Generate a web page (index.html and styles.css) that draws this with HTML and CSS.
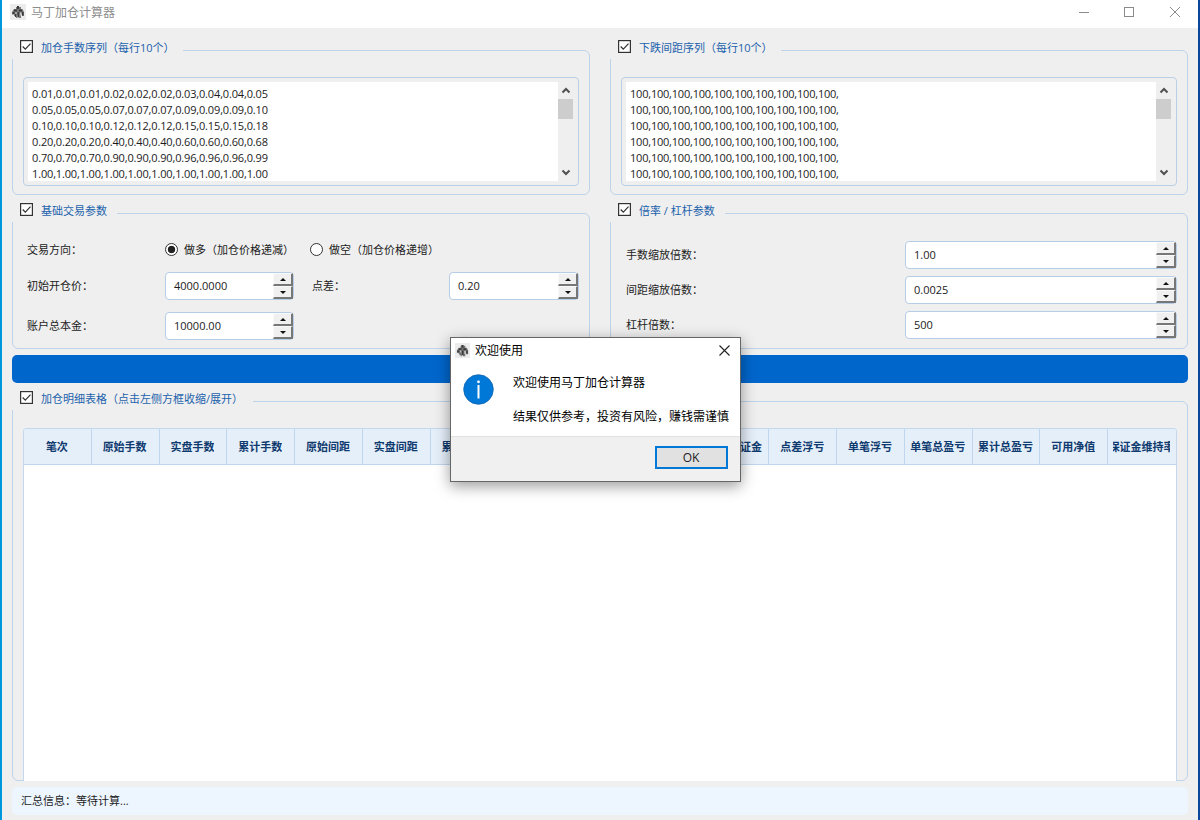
FILE: index.html
```html
<!DOCTYPE html>
<html lang="zh-CN">
  <head>
    <title>马丁加仓计算器</title>
    <meta charset="utf-8" />
    <link rel="stylesheet" href="styles.css">
  </head>
  <body>
    <svg class="defs" width="0" height="0">
      <symbol id="app-icon" viewBox="0 0 16 16">
        <rect width="16" height="16" fill="#ececec" />
        <path d="M6 3h1V2h2v1h2v2h1.500l1.500 3v4h-2v-1.500h-1V14H8.500v-3h-1v3H6v-3.500H5V12H4v-1.500H2V8L4 5h2z" fill="#777" />
        <path d="M7 2h2v3H7zM4 5.500h3v2H4zM9 5.500h3v2H9zM7.500 8H9v5H7.500zM2.500 8h2v2h-2zM12 8h1.500v3.500H12zM5 10h1v3H5z" fill="#3a3a3a" />
        <path d="M5.500 8h1v2h-1zM10 8.500h1.500v3H10z" fill="#ccc" />
      </symbol>
      <symbol id="up" viewBox="0 0 10 8">
        <path d="M1.500 6.500L5 3l3.500 3.500" fill="none" stroke="#505050" stroke-width="2" />
      </symbol>
      <symbol id="down" viewBox="0 0 10 8">
        <path d="M1.500 1.500L5 5l3.500-3.500" fill="none" stroke="#505050" stroke-width="2" />
      </symbol>
      <symbol id="check" viewBox="0 0 13 13">
        <rect x=".6" y=".6" width="11.800" height="11.800" fill="#fff" stroke="#333" stroke-width="1.200" />
        <path d="M2.700 6.500l2.600 2.700 5.200-5.600" fill="none" stroke="#333" stroke-width="1.200" />
      </symbol>
    </svg>

    <div class="window">
      <div class="titlebar">
        <svg class="app-icon"><use href="#app-icon" /></svg>
        <span class="title">马丁加仓计算器</span>
        <svg class="controls" width="102" height="12" viewBox="0 0 102 12" fill="none" stroke="#8a8a8a">
          <path d="M0 6.500h10" />
          <rect x="45.500" y="1.500" width="9" height="9" />
          <path d="M91 1l10 10M101 1L91 11" />
        </svg>
      </div>

      <div class="main">
        <div class="groups">
          <!-- Lot sequence -->
          <div class="group seq">
            <div class="legend w171"><svg class="check"><use href="#check" /></svg>加仓手数序列（每行10个）</div>
            <div class="editor">
              <pre class="lots">0.01,0.01,0.01,0.02,0.02,0.02,0.03,0.04,0.04,0.05
0.05,0.05,0.05,0.07,0.07,0.07,0.09,0.09,0.09,0.10
0.10,0.10,0.10,0.12,0.12,0.12,0.15,0.15,0.15,0.18
0.20,0.20,0.20,0.40,0.40,0.40,0.60,0.60,0.60,0.68
0.70,0.70,0.70,0.90,0.90,0.90,0.96,0.96,0.96,0.99
1.00,1.00,1.00,1.00,1.00,1.00,1.00,1.00,1.00,1.00</pre>
              <div class="scrollbar">
                <svg class="arrow"><use href="#up" /></svg>
                <div class="thumb"></div>
                <svg class="arrow last"><use href="#down" /></svg>
              </div>
            </div>
          </div>

          <!-- Distance sequence -->
          <div class="group seq">
            <div class="legend w171"><svg class="check"><use href="#check" /></svg>下跌间距序列（每行10个）</div>
            <div class="editor">
              <pre class="gaps">100,100,100,100,100,100,100,100,100,100,
100,100,100,100,100,100,100,100,100,100,
100,100,100,100,100,100,100,100,100,100,
100,100,100,100,100,100,100,100,100,100,
100,100,100,100,100,100,100,100,100,100,
100,100,100,100,100,100,100,100,100,100,</pre>
              <div class="scrollbar">
                <svg class="arrow"><use href="#up" /></svg>
                <div class="thumb"></div>
                <svg class="arrow last"><use href="#down" /></svg>
              </div>
            </div>
          </div>

          <!-- Base parameters -->
          <div class="group params">
            <div class="legend w105"><svg class="check"><use href="#check" /></svg>基础交易参数</div>
            <div class="base-form">
              <span>交易方向：</span>
              <div class="radios">
                <i class="radio on"></i><span class="long">做多（加仓价格递减）</span>
                <i class="radio"></i><span>做空（加仓价格递增）</span>
              </div>
              <span>初始开仓价：</span>
              <div class="spin"><span>4000.0000</span><div class="steps"><b class="inc"></b><b class="dec"></b></div></div>
              <span class="spread">点差：</span>
              <div class="spin"><span>0.20</span><div class="steps"><b class="inc"></b><b class="dec"></b></div></div>
              <span>账户总本金：</span>
              <div class="spin"><span>10000.00</span><div class="steps"><b class="inc"></b><b class="dec"></b></div></div>
            </div>
          </div>

          <!-- Multipliers -->
          <div class="group params">
            <div class="legend w115"><svg class="check"><use href="#check" /></svg>倍率 / 杠杆参数</div>
            <div class="ratio-form">
              <span>手数缩放倍数：</span>
              <div class="spin"><span>1.00</span><div class="steps"><b class="inc"></b><b class="dec"></b></div></div>
              <span>间距缩放倍数：</span>
              <div class="spin"><span>0.0025</span><div class="steps"><b class="inc"></b><b class="dec"></b></div></div>
              <span>杠杆倍数：</span>
              <div class="spin"><span>500</span><div class="steps"><b class="inc"></b><b class="dec"></b></div></div>
            </div>
          </div>
        </div>

        <button class="calc" type="button"></button>

        <!-- Result table -->
        <div class="group detail">
          <div class="legend w241"><svg class="check"><use href="#check" /></svg>加仓明细表格（点击左侧方框收缩/展开）</div>
          <div class="table">
            <div class="thead">
              <div><span>笔次</span></div>
              <div><span>原始手数</span></div>
              <div><span>实盘手数</span></div>
              <div><span>累计手数</span></div>
              <div><span>原始间距</span></div>
              <div><span>实盘间距</span></div>
              <div><span>累计间距</span></div>
              <div></div>
              <div></div>
              <div></div>
              <div><span>占用保证金</span></div>
              <div><span>点差浮亏</span></div>
              <div><span>单笔浮亏</span></div>
              <div><span>单笔总盈亏</span></div>
              <div><span>累计总盈亏</span></div>
              <div><span>可用净值</span></div>
              <div><span>保证金维持率</span></div>
            </div>
          </div>
        </div>

        <div class="status">汇总信息：等待计算...</div>
      </div>
    </div>

    <!-- Welcome message box -->
    <div class="dialog">
      <div class="dialog-title">
        <svg class="app-icon small"><use href="#app-icon" /></svg>
        <span>欢迎使用</span>
        <svg class="close" width="11" height="11" viewBox="0 0 11 11" fill="none" stroke="#222" stroke-width="1.100">
          <path d="M.5 .5l10 10M10.500 .5l-10 10" />
        </svg>
      </div>
      <div class="dialog-body">
        <svg class="info" width="31" height="31" viewBox="0 0 31 31">
          <circle cx="15.500" cy="15.500" r="14.800" fill="#0078d7" stroke="#1566ab" stroke-width=".8" />
          <path d="M15.500 11V24.500" stroke="#fff" stroke-width="2" />
          <circle cx="15.500" cy="7.800" r="1.400" fill="#fff" />
        </svg>
        <div class="message">
          <p>欢迎使用马丁加仓计算器</p>
          <p>结果仅供参考，投资有风险，赚钱需谨慎</p>
        </div>
      </div>
      <div class="dialog-foot">
        <button class="ok" type="button">OK</button>
      </div>
    </div>
  </body>
</html>
```
FILE: styles.css
```css
* {
  box-sizing: border-box;
}

body {
  margin: 0;
  font-family: "Open Sans", "Noto Sans CJK SC", sans-serif;
  font-size: 11px;
  line-height: 16px;
  color: #1c1c1c;
  overflow: hidden;
}

.defs {
  display: none;
}

.window {
  height: 820px;
  background: #efefef;
  border-left: 2px solid #0097dc;
  border-right: 2px solid #0a469b;
}

.titlebar {
  display: flex;
  align-items: center;
  height: 28px;
  padding: 0 17px 4px 8px;
  background: #fff;
  color: #8c8c8c;
  font-size: 12px;
}

.app-icon {
  width: 16px;
  height: 16px;
}

.title {
  margin-left: 5px;
  padding-top: 2px;
}

.controls {
  margin-left: auto;
}

.main {
  padding: 22px 10px 0;
}

.groups {
  display: grid;
  grid-template-columns: 578px 578px;
  grid-template-rows: 145px 136px;
  gap: 18px 20px;
}

.group {
  border: 1px solid #bdd3ea;
  border-radius: 6px;
}

/* the title strip hides the corner of the frame */
.legend {
  display: flex;
  align-items: center;
  height: 23px;
  margin: -15px 0 0 -1px;
  padding: 0 0 0 8px;
  background: #efefef;
  color: #1c62ac;
  white-space: nowrap;
}

.check {
  flex: none;
  width: 13px;
  height: 13px;
  margin: -3px 8px 0 0;
}

.w171 { width: 171px; }
.w105 { width: 105px; }
.w115 { width: 115px; }
.w241 { width: 241px; }

.editor {
  display: flex;
  height: 109px;
  margin: 18px 10px 0;
  padding: 4px;
  border: 1px solid #b9cfe6;
  border-radius: 4px;
}

.editor pre {
  flex: 1;
  margin: 0;
  padding: 4px 0 0 4px;
  background: #fff;
  font-family: inherit;
  line-height: 16px;
  overflow: hidden;
}

.lots {
  letter-spacing: -0.15px;
}

.gaps {
  letter-spacing: -0.21px;
}

.scrollbar {
  display: flex;
  flex-direction: column;
  align-items: center;
  width: 15px;
  margin-right: 1px;
  padding: 4px 0;
}

.arrow {
  width: 10px;
  height: 8px;
}

.arrow.last {
  margin-top: auto;
}

.thumb {
  width: 15px;
  height: 20px;
  margin-top: 5px;
  background: #cdcdcd;
}

.base-form {
  display: grid;
  grid-template-columns: 138px 129px 155px 130px;
  grid-template-rows: 28px 28px 28px;
  row-gap: 8px;
  align-items: center;
  padding: 14px 0 0 14px;
}

.base-form > :nth-child(n + 7) {
  margin-top: 8px;
}

.radios {
  display: flex;
  align-items: center;
  grid-column: 2 / 5;
}

.radio {
  width: 13px;
  height: 13px;
  margin: -1px 6px 0 0;
  border: 1px solid #333;
  border-radius: 50%;
  background: #fff;
}

.radio.on {
  background: radial-gradient(circle, #222 3.4px, #fff 4.1px);
}

.long {
  width: 126px;
}

.spread {
  padding-left: 18px;
}

.ratio-form {
  display: grid;
  grid-template-columns: 279px 272px;
  grid-auto-rows: 28px;
  row-gap: 7px;
  align-items: center;
  padding: 19px 0 0 15px;
}

.spin {
  display: flex;
  justify-content: space-between;
  align-items: center;
  height: 28px;
  padding-left: 8px;
  border: 1px solid #b5cde6;
  border-radius: 4px;
  background: #fff;
}

.steps {
  display: grid;
  grid-template-rows: 13px 13px;
  width: 20px;
}

.steps b {
  display: flex;
  justify-content: center;
  align-items: center;
  background: #f0f0f0;
  border: 1px solid #fafafa;
  border-right: 2px solid #777;
  border-bottom: 2px solid #777;
}

.steps b::before {
  content: "";
  border: 3px solid transparent;
}

.steps .inc::before {
  border-top: 0;
  border-bottom-color: #111;
}

.steps .dec::before {
  border-bottom: 0;
  border-top-color: #111;
}

.calc {
  display: block;
  width: 100%;
  height: 28px;
  margin: 6px 0 18px;
  border: 0;
  border-radius: 5px;
  background: #0066cc;
}

.detail {
  height: 380px;
}

.table {
  height: 353px;
  margin: 18px 10px 0;
  border: 1px solid #c3d8ec;
  border-bottom: 0;
  border-radius: 4px 4px 0 0;
  background: #fff;
  overflow: hidden;
}

.thead {
  display: grid;
  grid-template-columns: repeat(17, 1fr);
  height: 36px;
  background: #e5effa;
  border-bottom: 1px solid #bfd6ec;
  color: #0e3a6e;
  font-weight: bold;
}

.thead div {
  display: flex;
  justify-content: center;
  align-items: center;
  min-width: 0;
  padding: 0 6px 0 5px;
  border-right: 1px solid #bfd6ec;
}

.thead div:last-child {
  border-right: 0;
}

.thead span {
  display: flex;
  justify-content: center;
  max-width: 100%;
  white-space: nowrap;
  overflow: hidden;
}

.status {
  height: 28px;
  margin-top: 6px;
  padding: 6px 9px;
  border-radius: 5px;
  background: #edf5ff;
}

.dialog {
  position: absolute;
  left: 450px;
  top: 337px;
  display: flex;
  flex-direction: column;
  width: 291px;
  height: 145px;
  border: 1px solid #666;
  background: #fff;
  box-shadow: 0 4px 14px rgba(0, 0, 0, 0.4);
  color: #000;
  font-size: 12px;
}

.dialog-title {
  display: flex;
  align-items: center;
  height: 24px;
  padding: 0 10px 0 4px;
}

.dialog-title span {
  padding-top: 1px;
}

.small {
  width: 15px;
  height: 15px;
  margin-right: 5px;
}

.close {
  margin-left: auto;
}

.dialog-body {
  display: flex;
  flex: 1;
  min-height: 0;
  padding: 11px 0 0 12px;
}

.message {
  margin-left: 19px;
  white-space: nowrap;
}

.message p {
  margin: 2px 0 18px;
}

.info {
  margin-top: 1px;
}

.dialog-foot {
  display: flex;
  flex: none;
  justify-content: flex-end;
  height: 45px;
  padding: 9px 12px 0 0;
  border-top: 1px solid #e2e2e2;
  background: #f0f0f0;
}

.ok {
  width: 73px;
  height: 23px;
  padding: 0 1px 0 0;
  border: 2px solid #0078d7;
  background: #e1e1e1;
  font-family: inherit;
  font-size: 12px;
  color: #222;
}
```
